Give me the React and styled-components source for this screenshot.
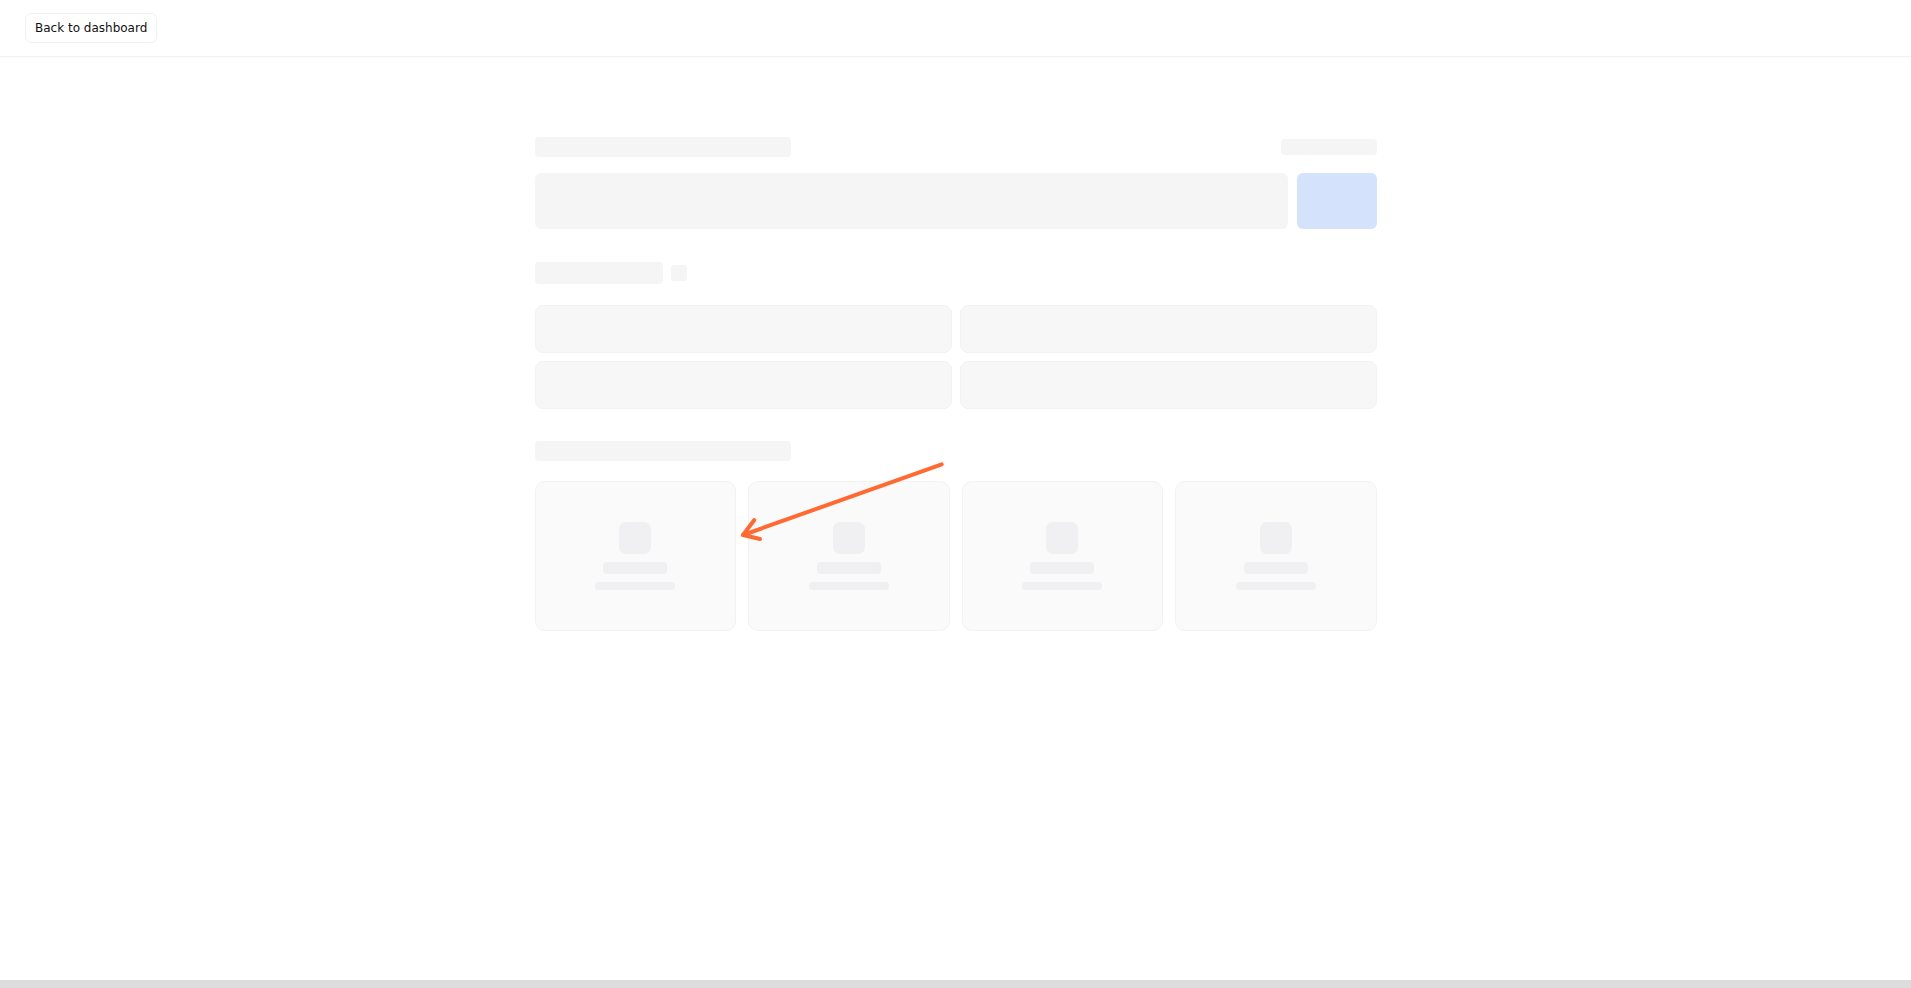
import React from 'react'
import styled, { createGlobalStyle } from 'styled-components'

const GlobalStyle = createGlobalStyle`
  html, body {
    margin: 0;
    padding: 0;
    background: #ffffff;
    font-family: "DejaVu Sans", "Liberation Sans", sans-serif;
  }
  * { box-sizing: border-box; }
`

const Page = styled.div`
  display: flex;
  flex-direction: column;
  min-height: 100vh;
  background: #ffffff;
`

const Header = styled.header`
  display: flex;
  align-items: center;
  height: 57px;
  padding: 0 24px 0 25px;
  border-bottom: 1px solid #f1f1f3;
`

const BackButton = styled.button`
  height: 30px;
  padding: 0 9px;
  margin-top: -1px;
  background: #ffffff;
  border: 1px solid #f0f0f2;
  border-radius: 6px;
  font-family: "DejaVu Sans", "Liberation Sans", sans-serif;
  font-size: 12px;
  color: #111111;
  cursor: pointer;
`

const Main = styled.main`
  flex: 1;
`

const Content = styled.div`
  position: relative;
  width: 842px;
  margin: 0 auto;
  padding-top: 80px;
`

const Bar = styled.div`
  width: ${p => p.w}px;
  height: ${p => p.h}px;
  background: ${p => p.bg || '#f5f5f6'};
  border-radius: ${p => p.r || 4}px;
  flex-shrink: 0;
`

const TopRow = styled.div`
  display: flex;
  align-items: center;
  justify-content: space-between;
  height: 20px;
`

const SearchRow = styled.div`
  display: flex;
  gap: 9px;
  margin-top: 16px;
  height: 56px;
`

const Input = styled.div`
  flex: 1;
  background: #f5f5f6;
  border-radius: 6px;
`

const Submit = styled.div`
  width: 80px;
  background: #d4e2fb;
  border-radius: 6px;
`

const SectionHead = styled.div`
  display: flex;
  align-items: center;
  gap: 8px;
  margin-top: ${p => p.mt}px;
  margin-bottom: ${p => p.mb}px;
  height: ${p => p.h}px;
`

const CardGrid = styled.div`
  display: grid;
  grid-template-columns: 1fr 1fr;
  gap: 8px;
`

const Card = styled.div`
  height: 48px;
  background: #f7f7f8;
  border: 1px solid #f2f2f3;
  border-radius: 8px;
`

const TileGrid = styled.div`
  display: grid;
  grid-template-columns: repeat(4, 1fr);
  gap: 12px;
`

const Tile = styled.div`
  height: 150px;
  display: flex;
  flex-direction: column;
  align-items: center;
  justify-content: center;
  background: #fafafa;
  border: 1px solid #f2f2f3;
  border-radius: 10px;
`

const TileIcon = styled.div`
  width: 32px;
  height: 32px;
  border-radius: 7px;
  background: #f0f0f2;
`

const TileLine = styled.div`
  width: ${p => p.w}px;
  height: ${p => p.h}px;
  margin-top: 8px;
  border-radius: 4px;
  background: #f0f0f2;
`

const Arrow = styled.svg`
  position: absolute;
  left: 200px;
  top: 400px;
  overflow: visible;
  pointer-events: none;
`

const BottomBar = styled.div`
  height: 8px;
  background: #dddddd;
`

export default function App() {
  return (
    <Page>
      <GlobalStyle />
      <Header>
        <BackButton>Back to dashboard</BackButton>
      </Header>
      <Main>
        <Content>
          <TopRow>
            <Bar w={256} h={20} />
            <Bar w={96} h={16} />
          </TopRow>
          <SearchRow>
            <Input />
            <Submit />
          </SearchRow>

          <SectionHead mt={33} mb={21} h={22}>
            <Bar w={128} h={22} />
            <Bar w={16} h={16} r={3} />
          </SectionHead>
          <CardGrid>
            {[0, 1, 2, 3].map(i => <Card key={i} />)}
          </CardGrid>

          <SectionHead mt={32} mb={20} h={20}>
            <Bar w={256} h={20} />
          </SectionHead>
          <TileGrid>
            {[0, 1, 2, 3].map(i => (
              <Tile key={i}>
                <TileIcon />
                <TileLine w={64} h={12} />
                <TileLine w={80} h={8} />
              </Tile>
            ))}
          </TileGrid>

          <Arrow width="215" height="90" viewBox="0 0 215 90">
            <g stroke="#ff6a33" strokeWidth="4" strokeLinecap="round" strokeLinejoin="round" fill="none">
              <path d="M206.7 7.3 L8 78" />
              <path d="M19.3 63 L8 78 L25 82" />
            </g>
          </Arrow>
        </Content>
      </Main>
      <BottomBar />
    </Page>
  )
}
